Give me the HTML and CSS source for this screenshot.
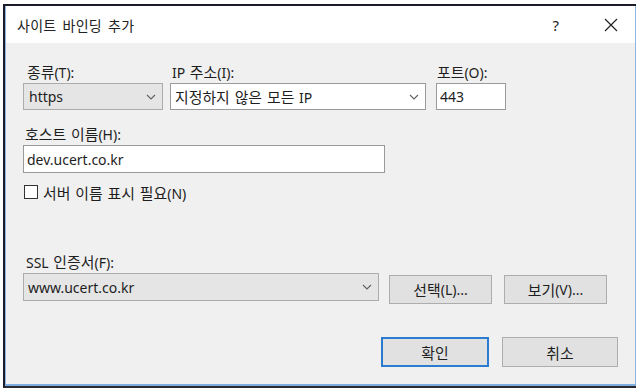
FILE: index.html
```html
<!DOCTYPE html>
<html lang="ko">
<head>
<meta charset="utf-8">
<title>사이트 바인딩 추가</title>
<link rel="stylesheet" href="styles.css">
</head>
<body>
<div class="frame">
  <div class="dialog">
    <div class="titlebar">
      <span class="title">사이트 바인딩 추가</span>
      <span class="help">?</span>
      <svg class="close" width="14" height="14" viewBox="0 0 14 14"><path d="M1 1 L13 13 M13 1 L1 13" stroke="#222" stroke-width="1.2" fill="none"/></svg>
    </div>
    <div class="content">
      <div class="row1">
        <div class="field f-type">
          <label class="lbl l-type"><span class="ko">종류</span>(T):</label>
          <div class="combo gray">
            <span>https</span>
            <svg class="chev" width="10" height="6" viewBox="0 0 10 6"><path d="M1 1 L5 5 L9 1" stroke="#606060" stroke-width="1.1" fill="none"/></svg>
          </div>
        </div>
        <div class="field f-ip">
          <label class="lbl l-ip">IP <span class="ko">주소</span>(I):</label>
          <div class="combo white">
            <span><span class="ko">지정하지 않은 모든</span> IP</span>
            <svg class="chev" width="10" height="6" viewBox="0 0 10 6"><path d="M1 1 L5 5 L9 1" stroke="#606060" stroke-width="1.1" fill="none"/></svg>
          </div>
        </div>
        <div class="field f-port">
          <label class="lbl l-port"><span class="ko">포트</span>(O):</label>
          <div class="input port">443</div>
        </div>
      </div>
      <label class="lbl l-host"><span class="ko">호스트 이름</span>(H):</label>
      <div class="input host">dev.ucert.co.kr</div>
      <div class="check-row">
        <span class="checkbox"></span>
        <span class="check-lbl"><span class="ko">서버 이름 표시 필요</span>(N)</span>
      </div>
      <label class="lbl l-ssl">SSL <span class="ko">인증서</span>(F):</label>
      <div class="ssl-row">
        <div class="combo gray ssl">
          <span>www.ucert.co.kr</span>
          <svg class="chev" width="10" height="6" viewBox="0 0 10 6"><path d="M1 1 L5 5 L9 1" stroke="#606060" stroke-width="1.1" fill="none"/></svg>
        </div>
        <button class="btn b-select"><span class="ko">선택</span>(L)...</button>
        <button class="btn b-view"><span class="ko">보기</span>(V)...</button>
      </div>
      <div class="actions">
        <button class="btn b-ok"><span class="ko">확인</span></button>
        <button class="btn b-cancel"><span class="ko">취소</span></button>
      </div>
    </div>
  </div>
</div>
</body>
</html>
```
FILE: styles.css
```css
* { box-sizing: border-box; }
html, body { margin: 0; padding: 0; }
body {
  background: #ffffff;
  width: 643px;
  height: 389px;
  overflow: hidden;
  font-family: "Noto Sans", "Noto Sans CJK KR", sans-serif;
  font-size: 14px;
  word-spacing: 1px;
  color: #1e1e1e;
}
.ko { font-size: 14.9px; }
.frame {
  margin: 4px 0 0 3px;
  width: 633px;
  height: 384px;
  border-left: 2px solid #1c1c28;
  border-top: 2px solid #1c1c28;
  border-bottom: 2px solid #2a2a30;
}
.dialog {
  width: 100%;
  height: 100%;
  border-left: 1px solid #8fb4dd;
  border-right: 1px solid #8fb4dd;
  border-bottom: 2px solid #7eaee0;
  background: #f0f0f0;
  display: flex;
  flex-direction: column;
}
.titlebar {
  height: 37px;
  background: #ffffff;
  display: flex;
  align-items: center;
  padding-left: 11px;
  flex: none;
}
.title {
  font-size: 14px;
  letter-spacing: 0.3px;
  word-spacing: 2px;
  color: #222;
  flex: 1;
}
.help {
  font-size: 15px;
  color: #222;
  margin-right: 45px;
}
.close { margin-right: 17px; }
.content {
  padding: 21px 0 0 17px;
  display: flex;
  flex-direction: column;
  align-items: flex-start;
}
.lbl {
  display: block;
  line-height: 16px;
  height: 16px;
  white-space: nowrap;
}
.row1 { display: flex; }
.field { display: flex; flex-direction: column; }
.f-type { width: 140px; margin-right: 7px; }
.f-ip { width: 256px; margin-right: 10px; }
.f-port { width: 70px; }
.l-type { margin-left: 4px; }
.l-ip { margin-left: 2px; }
.l-port { margin-left: 1px; }
.combo, .input {
  margin-top: 3px;
  height: 27px;
  display: flex;
  align-items: center;
  padding-left: 5px;
  border: 1px solid #acacac;
  white-space: nowrap;
}
.combo { justify-content: space-between; padding-right: 6px; }
.combo.gray { background: #e5e5e5; }
.combo.white { background: #ffffff; border-color: #9a9a9a; padding-left: 4px; }
.input { background: #ffffff; border-color: #9a9a9a; padding-left: 3px; }
.port { width: 70px; }
.l-host { margin-top: 16px; margin-left: 2px; }
.host { width: 362px; height: 28px; }
.check-row {
  margin-top: 12px;
  display: flex;
  align-items: center;
  height: 14px;
  white-space: nowrap;
}
.checkbox {
  width: 14px;
  height: 14px;
  background: #fff;
  border: 1px solid #333;
  margin-left: 1px;
  margin-right: 5px;
  flex: none;
}
.l-ssl { margin-top: 55px; margin-left: 3px; }
.ssl-row { display: flex; align-items: flex-start; }
.ssl { width: 356px; height: 28px; padding-left: 4px; }
.btn {
  font: inherit;
  word-spacing: inherit;
  color: #1e1e1e;
  background: #e1e1e1;
  border: 1px solid #adadad;
  padding: 0;
  display: flex;
  align-items: center;
  justify-content: center;
  white-space: nowrap;
}
.b-select { margin: 5px 0 0 10px; width: 103px; height: 29px; }
.b-view { margin: 5px 0 0 12px; width: 103px; height: 29px; }
.actions { display: flex; margin-top: 33px; margin-left: 358px; }
.b-ok { width: 108px; height: 30px; border: 2px solid #2b7bd0; }
.b-cancel { width: 116px; height: 30px; margin-left: 13px; }
```
